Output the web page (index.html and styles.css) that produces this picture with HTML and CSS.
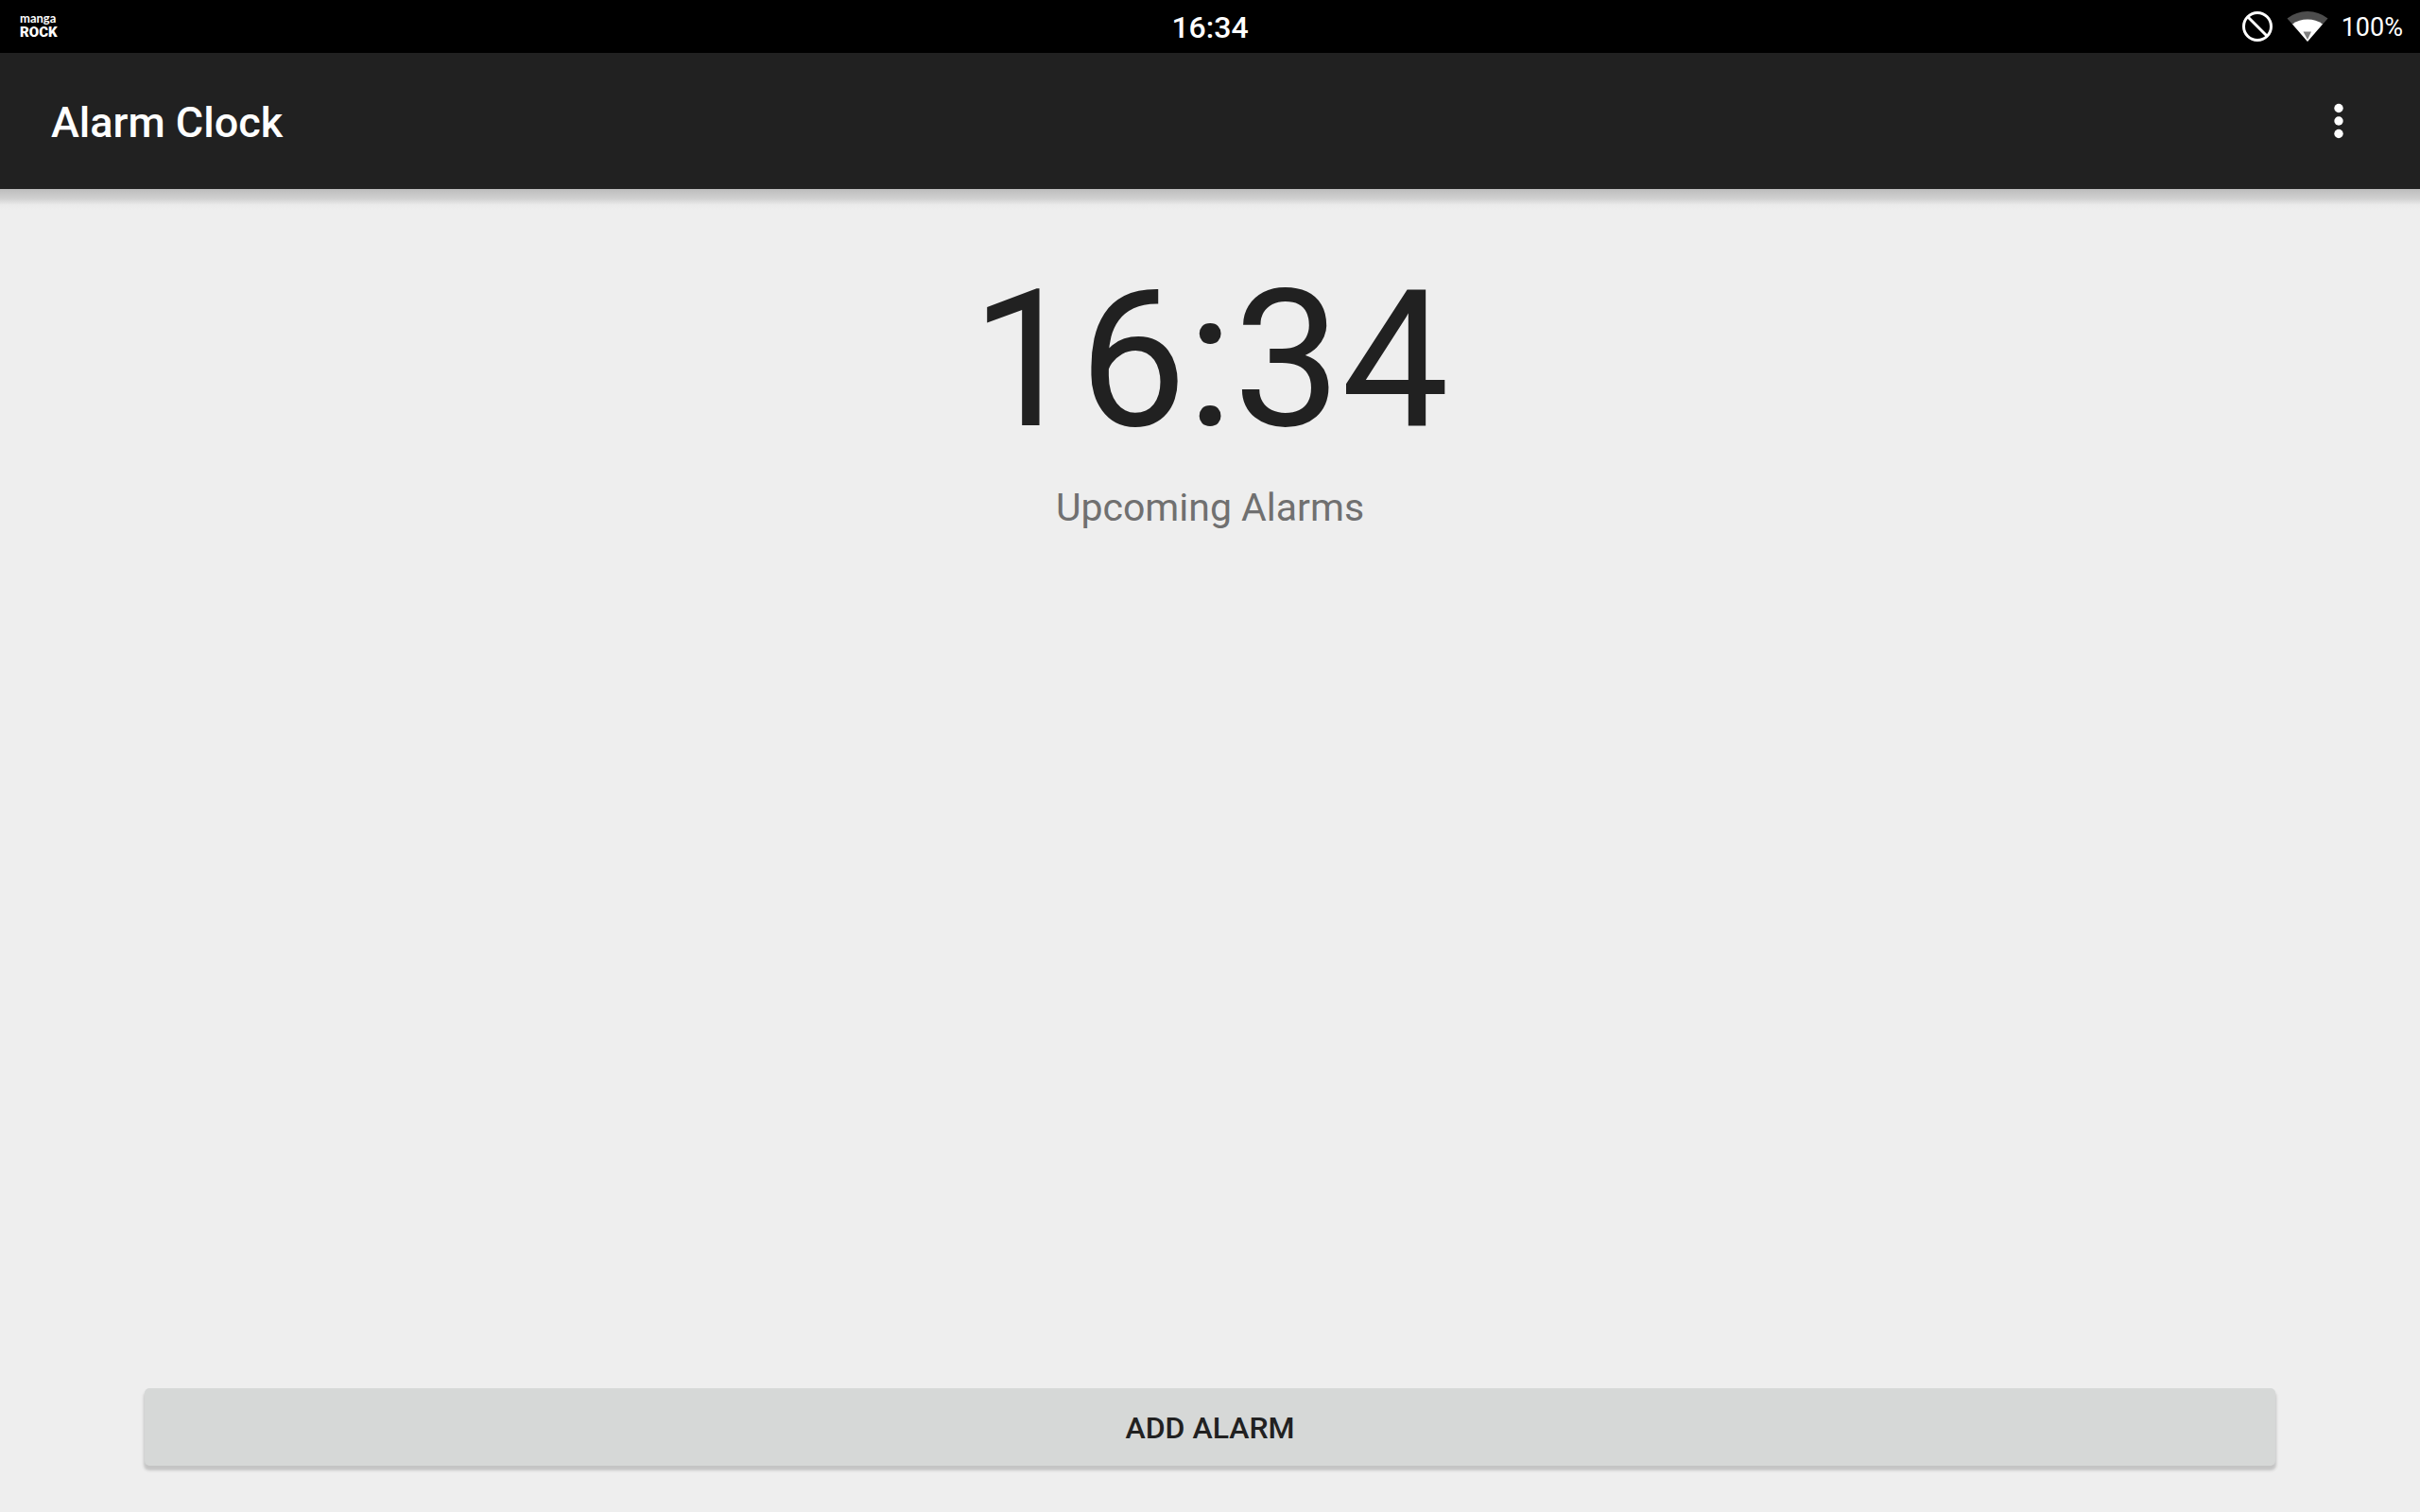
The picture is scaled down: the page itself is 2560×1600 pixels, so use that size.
FILE: index.html
```html
<!DOCTYPE html>
<html lang="en">
<head>
<meta charset="utf-8">
<meta name="viewport" content="width=device-width, initial-scale=1">
<title>Alarm Clock</title>
<link rel="stylesheet" href="styles.css">
</head>
<body>
<div class="status-bar">
  <div class="notifications">
    <div class="brand"><span class="brand-top">manga</span><span class="brand-bottom">ROCK</span></div>
  </div>
  <time class="status-time">16:34</time>
  <div class="indicators">
    <svg class="icon-blocked" viewBox="0 0 32 32" aria-hidden="true">
      <circle cx="16" cy="16" r="14.5"/>
      <path d="M6 6 26 26"/>
    </svg>
    <svg class="icon-wifi" viewBox="0 0 44 32" aria-hidden="true">
      <path fill="#4d4d4d" d="M22 32 0.500 7.500Q10 0 22 0T43.500 7.500Z"/>
      <path fill="#fff" d="M22 32 6 13.500Q13 8.500 22 8.500T38 13.500Z"/>
      <path fill="#808080" d="M17.500 21.500H26L22 30Z"/>
    </svg>
    <span class="battery">100%</span>
  </div>
</div>
<header class="app-bar">
  <h1 class="title">Alarm Clock</h1>
  <button class="menu-button" type="button" aria-label="More options">
    <svg class="icon-more" viewBox="0 0 10 38" aria-hidden="true">
      <circle cx="5" cy="5.500" r="4.700"/>
      <circle cx="5" cy="19" r="4.700"/>
      <circle cx="5" cy="32.500" r="4.700"/>
    </svg>
  </button>
</header>
<main class="content">
  <time class="clock">16:34</time>
  <h2 class="subtitle">Upcoming Alarms</h2>
  <button class="add-button" type="button">ADD ALARM</button>
</main>
</body>
</html>
```
FILE: styles.css
```css
* {
  box-sizing: border-box;
}

body {
  margin: 0;
  min-height: 100vh;
  display: flex;
  flex-direction: column;
  background: #eee;
  color: #212121;
  font-family: Roboto, "Liberation Sans", sans-serif;
}

button {
  border: 0;
  padding: 0;
  font: inherit;
  color: inherit;
  cursor: pointer;
}

.status-bar {
  height: 56px;
  padding: 0 18px;
  display: grid;
  grid-template-columns: 1fr auto 1fr;
  align-items: center;
  background: #000;
  color: #fff;
}

.notifications {
  padding-left: 3px;
}

.brand {
  display: flex;
  flex-direction: column;
}

.brand-top {
  font-family: Lato, sans-serif;
  font-weight: 700;
  font-size: 13px;
  line-height: 12px;
}

.brand-bottom {
  font-weight: 900;
  font-size: 15px;
  line-height: 18px;
}

.status-time {
  padding-top: 2px;
  font-size: 32px;
  font-weight: 500;
}

.indicators {
  display: flex;
  justify-content: flex-end;
  align-items: center;
}

.icon-blocked {
  width: 32px;
  height: 32px;
  margin-right: 15px;
  fill: none;
  stroke: #fff;
  stroke-width: 3;
}

.icon-wifi {
  width: 44px;
  height: 32px;
  margin-right: 14px;
}

.battery {
  padding-top: 2px;
  font-size: 27px;
}

.app-bar {
  height: 144px;
  padding: 0 54px;
  display: flex;
  justify-content: space-between;
  align-items: center;
  background: #212121;
  color: #fff;
}

.title {
  margin: 0;
  padding-top: 2px;
  font-size: 45px;
  font-weight: 500;
}

.menu-button {
  width: 64px;
  height: 108px;
  display: flex;
  justify-content: center;
  align-items: center;
  background: none;
}

.icon-more {
  width: 10px;
  height: 38px;
  fill: #fff;
}

.content {
  flex: 1;
  padding: 53px 153px 49px;
  display: flex;
  flex-direction: column;
  align-items: center;
  background: linear-gradient(#bdbdbd, #d0d0d0 10px, #ebebeb 17px, #eee 22px);
}

.clock {
  font-size: 203px;
  line-height: 256px;
}

.subtitle {
  margin: 4px 0 0;
  font-size: 41px;
  line-height: 48px;
  font-weight: 400;
  color: #707070;
}

.add-button {
  align-self: stretch;
  height: 82px;
  margin-top: auto;
  padding-top: 2px;
  border-radius: 5px;
  background: #d6d8d7;
  box-shadow: 0 4px 3px 1px #c4c4c4;
  font-size: 32px;
  font-weight: 500;
}
```
